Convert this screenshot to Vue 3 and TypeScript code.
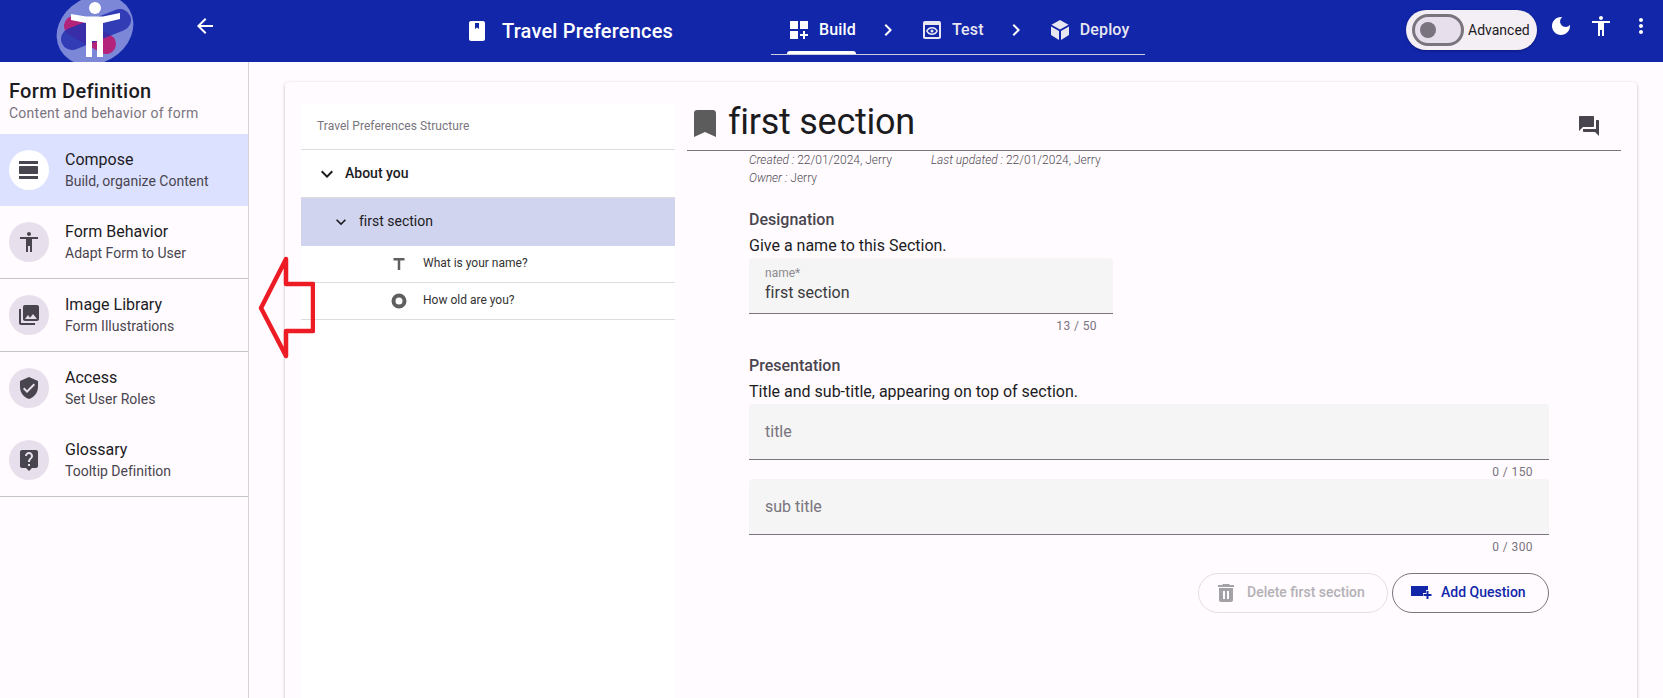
<script setup lang="ts">
interface NavItem {
  title: string
  sub: string
  icon: string
  active?: boolean
  line?: boolean
}

const navItems: NavItem[] = [
  { title: 'Compose', sub: 'Build, organize Content', icon: 'compose', active: true },
  { title: 'Form Behavior', sub: 'Adapt Form to User', icon: 'person', line: true },
  { title: 'Image Library', sub: 'Form Illustrations', icon: 'images', line: true },
  { title: 'Access', sub: 'Set User Roles', icon: 'shield' },
  { title: 'Glossary', sub: 'Tooltip Definition', icon: 'help', line: true },
]

const personPath =
  'M12 2c1.1 0 2 .9 2 2s-.9 2-2 2-2-.9-2-2 .9-2 2-2zm9 7h-6v13h-2v-6h-2v6H9V9H3V7h18v2z'

const chevronRight = 'M10 6L8.59 7.41 13.17 12l-4.58 4.59L10 18l6-6z'
const chevronDown = 'M16.59 8.59L12 13.17 7.41 8.59 6 10l6 6 6-6z'

const paths: Record<string, string> = {
  compose: 'M2 21h19v-3H2v3zM20 8H3c-.55 0-1 .45-1 1v6c0 .55.45 1 1 1h17c.55 0 1-.45 1-1V9c0-.55-.45-1-1-1zM2 3v3h19V3H2z',
  person: personPath,
  images: 'M22 16V4c0-1.1-.9-2-2-2H8c-1.1 0-2 .9-2 2v12c0 1.1.9 2 2 2h12c1.1 0 2-.9 2-2zm-11-4l2.03 2.71L16 11l4 5H8l3-4zM2 6v14c0 1.1.9 2 2 2h14v-2H4V6H2z',
  shield: 'M12 1L3 5v6c0 5.55 3.84 10.74 9 12 5.16-1.26 9-6.45 9-12V5l-9-4zm-2 16l-4-4 1.41-1.41L10 14.17l6.59-6.59L18 9l-8 8z',
  help: 'M19 2H5c-1.1 0-2 .9-2 2v14c0 1.1.9 2 2 2h4l3 3 3-3h4c1.1 0 2-.9 2-2V4c0-1.1-.9-2-2-2zm-6 16h-2v-2h2v2zm2.07-7.75l-.9.92C13.45 11.9 13 12.5 13 14h-2v-.5c0-1.1.45-2.1 1.17-2.83l1.24-1.26c.37-.36.59-.86.59-1.41 0-1.1-.9-2-2-2s-2 .9-2 2H8c0-2.21 1.79-4 4-4s4 1.79 4 4c0 .88-.36 1.68-.93 2.25z',
}
</script>

<template>
  <div class="page">
    <header class="topbar">
      <div class="brand">
        <svg class="logo" viewBox="0 0 90 62" width="90" height="62">
          <ellipse cx="45" cy="30" rx="40" ry="33" transform="rotate(-30 45 30)" fill="#7c87d8" />
          <path d="M24 26L56 44" stroke="#b3237a" stroke-width="20" stroke-linecap="round" />
          <path d="M22 39L70 20" stroke="#2430b0" stroke-width="22" stroke-linecap="round" opacity="0.85" />
          <circle cx="45" cy="8" r="6" fill="#fff" />
          <path d="M21 14L36 16.500H53L70 13V19L53 23V57H47V41H42V57H36V23L21 20Z" fill="#fff" />
        </svg>
      </div>
      <button class="icon-btn back">
        <svg viewBox="0 0 24 24" width="24" height="24"><path fill="#fff" d="M20 11H7.83l5.59-5.59L12 4l-8 8 8 8 1.41-1.41L7.83 13H20v-2z" /></svg>
      </button>
      <div class="form-name">
        <svg viewBox="0 0 24 24" width="24" height="24"><path fill="#fff" d="M18 2H6c-1.1 0-2 .9-2 2v16c0 1.1.9 2 2 2h12c1.1 0 2-.9 2-2V4c0-1.1-.9-2-2-2zM10 4h4v6l-2-1.500L10 10z" /></svg>
        <span>Travel Preferences</span>
      </div>
      <nav class="steps">
        <div class="step active">
          <svg viewBox="0 0 24 24" width="24" height="24"><path fill="#fff" d="M3 3h8v8H3zM13 3h8v8h-8zM3 13h8v8H3zM18 13h-2v3h-3v2h3v3h2v-3h3v-2h-3z" /></svg>
          <span>Build</span>
        </div>
        <svg class="chev" viewBox="0 0 24 24" width="24" height="24"><path fill="#fff" :d="chevronRight" /></svg>
        <div class="step">
          <svg viewBox="0 0 24 24" width="24" height="24"><path fill="#e8e6f0" fill-rule="evenodd" d="M19 3H5c-1.11 0-2 .9-2 2v14c0 1.1.89 2 2 2h14c1.1 0 2-.9 2-2V5c0-1.1-.9-2-2-2zm0 16H5V7h14v12zM12 10.500c1.790 0 3.400.9 4.300 2.500-.9 1.600-2.500 2.500-4.300 2.500S8.600 14.600 7.700 13c.9-1.600 2.500-2.500 4.300-2.500zM12 9c-2.730 0-5.060 1.660-6 4 .94 2.340 3.270 4 6 4s5.060-1.660 6-4c-.94-2.340-3.270-4-6-4zm0 5.500a1.500 1.500 0 1 0 0-3 1.500 1.500 0 0 0 0 3z" /></svg>
          <span>Test</span>
        </div>
        <svg class="chev" viewBox="0 0 24 24" width="24" height="24"><path fill="#fff" :d="chevronRight" /></svg>
        <div class="step">
          <svg viewBox="0 0 24 24" width="24" height="24"><path fill="#e8e6f0" d="M12 2L20.500 6.800 12 11.500 3.500 6.800zM3 8.500L11 13V22L3.800 17.500Q3 17 3 16zM21 8.500L13 13V22L20.200 17.500Q21 17 21 16z" /></svg>
          <span>Deploy</span>
        </div>
      </nav>
      <div class="tools">
        <div class="advanced">
          <span class="switch"><i></i></span>
          <span>Advanced</span>
        </div>
        <svg viewBox="0 0 24 24" width="24" height="24"><path fill="#fff" d="M12 3c-4.970 0-9 4.030-9 9s4.030 9 9 9 9-4.030 9-9c0-.46-.04-.92-.1-1.360-.98 1.370-2.580 2.260-4.400 2.260-2.980 0-5.400-2.420-5.400-5.400 0-1.810.89-3.420 2.260-4.400-.44-.06-.9-.1-1.360-.1z" /></svg>
        <svg viewBox="0 0 24 24" width="24" height="24"><path fill="#fff" :d="personPath" /></svg>
        <svg viewBox="0 0 24 24" width="24" height="24"><path fill="#fff" d="M12 8c1.100 0 2-.9 2-2s-.9-2-2-2-2 .9-2 2 .9 2 2 2zm0 2c-1.100 0-2 .9-2 2s.9 2 2 2 2-.9 2-2-.9-2-2-2zm0 6c-1.100 0-2 .9-2 2s.9 2 2 2 2-.9 2-2-.9-2-2-2z" /></svg>
      </div>
    </header>

    <div class="body">
      <aside class="sidebar">
        <div class="side-head">
          <h2>Form Definition</h2>
          <p>Content and behavior of form</p>
        </div>
        <div
          v-for="item in navItems"
          :key="item.title"
          class="nav-item"
          :class="{ active: item.active, line: item.line }"
        >
          <span class="avatar">
            <svg viewBox="0 0 24 24" width="24" height="24"><path fill="#49454f" :d="paths[item.icon]" /></svg>
          </span>
          <div class="nav-text">
            <div class="nav-title">{{ item.title }}</div>
            <div class="nav-sub">{{ item.sub }}</div>
          </div>
        </div>
      </aside>

      <main class="content">
        <div class="card">
          <section class="tree">
            <div class="tree-head">Travel Preferences Structure</div>
            <div class="tree-row group">
              <svg viewBox="0 0 24 24" width="24" height="24"><path fill="#1c1b1f" :d="chevronDown" /></svg>
              <span>About you</span>
            </div>
            <div class="tree-row selected">
              <svg viewBox="0 0 24 24" width="20" height="20"><path fill="#1c1b1f" :d="chevronDown" /></svg>
              <span>first section</span>
            </div>
            <div class="tree-row question">
              <svg viewBox="0 0 24 24" width="24" height="24"><path fill="#5f5f5f" d="M6.500 6v2.500h4.250V18h2.500V8.500h4.250V6z" /></svg>
              <span>What is your name?</span>
            </div>
            <div class="tree-row question">
              <svg viewBox="0 0 24 24" width="24" height="24"><path fill="#5f5f5f" d="M12 4.500a7.500 7.500 0 1 0 0 15 7.500 7.500 0 0 0 0-15zm0 11a3.500 3.500 0 1 1 0-7 3.500 3.500 0 0 1 0 7z" /></svg>
              <span>How old are you?</span>
            </div>
          </section>

          <section class="detail">
            <div class="detail-head">
              <svg class="bookmark" viewBox="0 0 22 27" width="22" height="27"><path fill="#5c5c5c" d="M3 0h16c1.500 0 3 1.300 3 3v24l-11-5-11 5V3C0 1.300 1.500 0 3 0z" /></svg>
              <h1>first section</h1>
              <svg class="forum" viewBox="0 0 24 24" width="24" height="24"><path fill="#49454f" d="M21 6h-2v9H6v2c0 .55.45 1 1 1h11l4 4V7c0-.55-.45-1-1-1zm-4 6V3c0-.55-.45-1-1-1H3c-.55 0-1 .45-1 1v14l4-4h10c.55 0 1-.45 1-1z" /></svg>
            </div>
            <div class="detail-body">
              <div class="meta">
                <div><em>Created : </em>22/01/2024, Jerry<em class="updated">Last updated : </em>22/01/2024, Jerry</div>
                <div><em>Owner : </em>Jerry</div>
              </div>

              <h3>Designation</h3>
              <p class="hint">Give a name to this Section.</p>
              <div class="field name">
                <label>name*</label>
                <div class="value">first section</div>
              </div>
              <div class="count name-count">13 / 50</div>

              <h3>Presentation</h3>
              <p class="hint">Title and sub-title, appearing on top of section.</p>
              <div class="field empty">title</div>
              <div class="count">0 / 150</div>
              <div class="field empty">sub title</div>
              <div class="count">0 / 300</div>

              <div class="actions">
                <button class="pill disabled">
                  <svg viewBox="0 0 24 24" width="24" height="24"><path fill="#a3a1a6" d="M15 3l1 1h4v2H4V4h4l1-1h6zM5 7h14v12c0 1.100-.9 2-2 2H7c-1.100 0-2-.9-2-2V7zm4 3v8h2v-8H9zm4 0v8h2v-8h-2z" /></svg>
                  <span>Delete first section</span>
                </button>
                <button class="pill add">
                  <svg viewBox="0 0 24 24" width="24" height="24"><path fill="#1226aa" d="M2 5h17v4h-2v3h-3v3H2zM17.500 10h2v3h3v2h-3v3h-2v-3h-3v-2h3z" /></svg>
                  <span>Add Question</span>
                </button>
              </div>
            </div>
          </section>
        </div>
      </main>
    </div>

    <svg class="arrow" viewBox="0 0 60 110" width="60" height="110">
      <path d="M31 7L6 56l25 48V79h27V32H31z" fill="none" stroke="#ed1c24" stroke-width="4.500" stroke-linejoin="round" />
    </svg>
  </div>
</template>

<style>
html,
body {
  margin: 0;
  overflow: hidden;
  background: #fffbfe;
}
</style>

<style scoped>
.page {
  position: relative;
  width: 1663px;
  height: 698px;
  overflow: hidden;
  display: flex;
  flex-direction: column;
  font-family: Roboto, "Liberation Sans", sans-serif;
  font-variant-ligatures: none;
  color: #1c1b1f;
  background: #fffbfe;
}

.topbar {
  flex: 0 0 62px;
  display: flex;
  align-items: center;
  background: #1226aa;
  color: #fff;
}

.brand {
  width: 168px;
  height: 62px;
  padding-left: 50px;
  box-sizing: border-box;
  flex: none;
}

.logo {
  display: block;
}

.icon-btn {
  border: 0;
  background: none;
  padding: 0;
  display: flex;
}

.back {
  margin: -10px 0 0 25px;
}

.form-name {
  margin-left: 248px;
  width: 306px;
  display: flex;
  align-items: center;
  gap: 13px;
  font-size: 20px;
  font-weight: 500;
  letter-spacing: 0.2px;
  flex: none;
}

.steps {
  width: 374px;
  height: 55px;
  align-self: flex-start;
  box-sizing: border-box;
  padding: 4px 0 0 16px;
  display: flex;
  align-items: center;
  border-bottom: 1px solid #cfcfdc;
  font-size: 16px;
  font-weight: 500;
  letter-spacing: 0.15px;
  flex: none;
}

.step {
  display: flex;
  align-items: center;
  gap: 8px;
  color: #e8e6f0;
  position: relative;
  height: 100%;
}

.step svg,
.chev {
  margin-top: 2px;
}

.step.active {
  color: #fff;
}

.step.active::after {
  content: "";
  position: absolute;
  left: 0;
  right: 0;
  bottom: 0;
  height: 3px;
  border-radius: 3px 3px 0 0;
  background: #fff;
}

.chev {
  margin-left: 20px;
  margin-right: 20px;
}

.tools {
  margin-left: auto;
  margin-right: 10px;
  margin-top: -2px;
  display: flex;
  align-items: center;
  gap: 16px;
}

.tools > svg {
  margin-bottom: 8px;
}

.advanced {
  width: 131px;
  height: 40px;
  margin-right: -4px;
  box-sizing: border-box;
  padding-left: 6px;
  border-radius: 20px;
  background: #f4eff4;
  box-shadow: 0 1px 3px rgba(0, 0, 0, 0.3);
  display: flex;
  align-items: center;
  gap: 4px;
  font-size: 14px;
  color: #1c1b1f;
}

.switch {
  width: 52px;
  height: 32px;
  box-sizing: border-box;
  border: 3px solid #79747e;
  border-radius: 16px;
  background: #e7e0ec;
  display: flex;
  align-items: center;
  padding-left: 5px;
}

.switch i {
  width: 16px;
  height: 16px;
  border-radius: 50%;
  background: #79747e;
}

.body {
  flex: 1;
  display: flex;
  min-height: 0;
}

.sidebar {
  width: 249px;
  flex: none;
  box-sizing: border-box;
  border-right: 1px solid #d6d3d8;
}

.side-head {
  height: 72px;
  box-sizing: border-box;
  padding: 17px 9px 0;
}

.side-head h2 {
  margin: 0;
  font-size: 20px;
  line-height: 24px;
  font-weight: 500;
  letter-spacing: 0.3px;
}

.side-head p {
  margin: 1px 0 0;
  font-size: 14px;
  line-height: 18px;
  letter-spacing: 0.25px;
  color: #79747e;
}

.nav-item {
  height: 72px;
  box-sizing: border-box;
  padding-left: 9px;
  display: flex;
  align-items: center;
  gap: 16px;
}

.nav-item.line {
  height: 73px;
  border-bottom: 1px solid #c4c7c5;
}

.nav-item.active {
  background: #dce1ff;
}

.avatar {
  width: 40px;
  height: 40px;
  border-radius: 50%;
  background: #e7e0ec;
  display: flex;
  align-items: center;
  justify-content: center;
  flex: none;
}

.active .avatar {
  background: #fff;
}

.nav-text {
  padding-bottom: 2px;
}

.nav-title {
  font-size: 16px;
  line-height: 24px;
}

.nav-sub {
  margin-top: -1px;
  font-size: 14px;
  line-height: 20px;
  color: #49454f;
}

.content {
  flex: 1;
  min-width: 0;
  padding: 20px 0 0 36px;
}

.card {
  width: 1352px;
  height: 640px;
  box-sizing: border-box;
  padding: 21px 16px 0;
  display: flex;
  border-radius: 4px;
  background: #fffbfe;
  box-shadow: 0 1px 3px rgba(0, 0, 0, 0.3);
}

.tree {
  width: 374px;
  flex: none;
  background: #fff;
  font-size: 12px;
}

.tree-head {
  height: 47px;
  box-sizing: border-box;
  padding: 13px 16px 0;
  line-height: 20px;
  letter-spacing: 0.05px;
  color: #79747e;
  border-bottom: 1px solid #ddd;
}

.tree-row {
  display: flex;
  align-items: center;
  box-sizing: border-box;
}

.group {
  height: 48px;
  padding-left: 14px;
  gap: 6px;
  font-size: 14px;
  font-weight: 500;
  border-bottom: 1px solid #ddd;
}

.group span,
.question span {
  margin-bottom: 2px;
}

.selected {
  height: 48px;
  padding-left: 30px;
  gap: 8px;
  font-size: 14px;
  background: #d0d4ee;
}

.selected span {
  margin-bottom: 3px;
}

.question {
  height: 37px;
  padding-left: 86px;
  gap: 12px;
  color: #333;
  border-bottom: 1px solid #ddd;
}

.detail {
  flex: 1;
  min-width: 0;
  margin-left: 12px;
}

.detail-head {
  height: 48px;
  box-sizing: border-box;
  padding-left: 7px;
  position: relative;
  display: flex;
  align-items: center;
  gap: 12px;
  border-bottom: 1px solid #79747e;
}

.detail-head h1 {
  margin: 0 0 10px;
  font-size: 36px;
  line-height: 40px;
  font-weight: 400;
  letter-spacing: -0.25px;
}

.bookmark {
  margin-bottom: 7px;
}

.forum {
  position: absolute;
  right: 20px;
  top: 11px;
}

.detail-body {
  padding-left: 62px;
  width: 862px;
  box-sizing: border-box;
  font-size: 16px;
}

.meta {
  font-size: 12px;
  line-height: 18px;
  font-weight: 300;
  color: #4f4b53;
}

.updated {
  margin-left: 39px;
}

h3 {
  margin: 21px 0 0;
  font-size: 16px;
  line-height: 24px;
  font-weight: 500;
  color: #49454f;
}

.hint {
  margin: 3px 0 1px;
  line-height: 22px;
}

.field {
  background: #f4f5f4;
  border-radius: 4px 4px 0 0;
  border-bottom: 1px solid #79747e;
  box-sizing: border-box;
  padding: 0 16px;
  height: 56px;
}

.field.name {
  width: 364px;
  padding-top: 8px;
}

.field label {
  display: block;
  font-size: 12px;
  line-height: 14px;
  color: #8c8a90;
}

.value {
  margin-top: 1px;
  font-size: 16px;
  line-height: 24px;
  color: #3b3a3e;
}

.field.empty {
  line-height: 55px;
  color: #79747e;
}

.count {
  height: 19px;
  padding-right: 16px;
  text-align: right;
  font-size: 12px;
  line-height: 24px;
  letter-spacing: 0.4px;
  color: #79747e;
}

.name-count {
  width: 348px;
}

.actions {
  margin-top: 19px;
  display: flex;
  justify-content: flex-end;
  gap: 4px;
}

.pill {
  height: 40px;
  box-sizing: border-box;
  padding: 0 0 0 16px;
  border-radius: 20px;
  background: none;
  border: 1px solid #79747e;
  display: flex;
  align-items: center;
  gap: 8px;
  font-family: inherit;
  font-size: 14px;
  font-weight: 500;
  white-space: nowrap;
}

.pill span {
  margin-bottom: 2px;
}

.pill.disabled {
  width: 190px;
  padding-left: 15px;
  gap: 9px;
  border-color: #e2e0e4;
  color: #b3b1b6;
}

.pill.add {
  width: 157px;
  color: #1226aa;
}

.arrow {
  position: absolute;
  left: 255px;
  top: 252px;
}
</style>
